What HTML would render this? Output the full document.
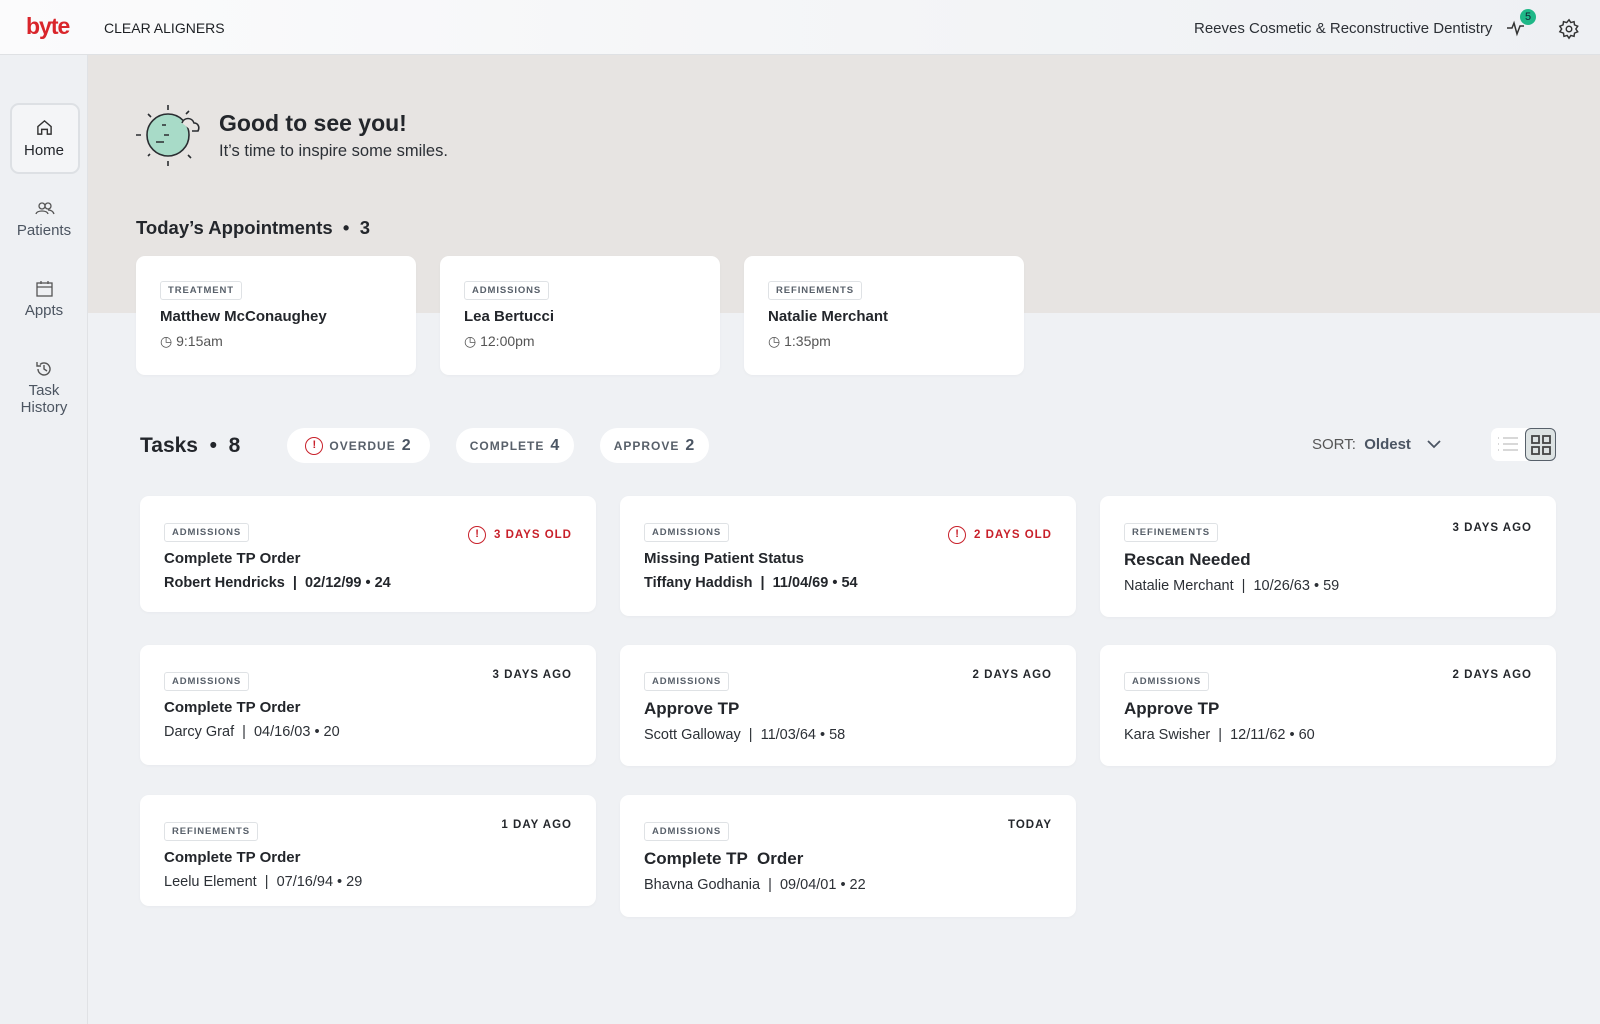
<!DOCTYPE html>
<html><head><meta charset="utf-8"><style>
*{box-sizing:border-box;margin:0;padding:0}
body{width:1600px;height:1024px;overflow:hidden;background:#eff1f4;font-family:"Liberation Sans",sans-serif;color:#23262b;position:relative}
.abs{position:absolute}
.hdr{left:0;top:0;width:1600px;height:55px;background:linear-gradient(90deg,#fbfbfc,#eef0f3);border-bottom:1px solid #dfe1e4}
.side{left:0;top:55px;width:88px;height:969px;background:#eef0f3;border-right:1px solid #e0e2e5}
.beige{left:88px;top:55px;width:1512px;height:258px;background:#e7e4e2}
.nav{width:88px;text-align:center;font-size:15px;color:#4c5561}
.card{background:#fff;border-radius:9px;box-shadow:0 1px 3px rgba(0,0,0,.03)}
.tag{display:inline-block;border:1px solid #dfe2e5;border-radius:3px;font-size:9.5px;font-weight:bold;letter-spacing:.9px;color:#58606a;padding:3px 7px;line-height:11px}
.t1{font-size:15px;font-weight:bold;margin-top:8px}
.t2{font-size:14.5px;margin-top:8px;color:#2c3036}
.rl{position:absolute;right:24px;top:30px;font-size:11.5px;font-weight:bold;letter-spacing:1px}
.red{color:#c8202a}
.pill{background:#fff;border-radius:18px;height:35px;top:428px;font-size:12px;font-weight:bold;letter-spacing:1px;color:#58606a;display:flex;align-items:center;justify-content:center;gap:6px}
.pill b{font-size:16px;color:#4b5563}
.ic{display:inline-block;width:18px;height:18px;border:1.6px solid #c8202a;border-radius:50%;color:#c8202a;font-size:11px;text-align:center;line-height:15px;font-weight:bold;letter-spacing:0}
</style></head><body>
<div class="abs hdr"></div>
<div class="abs" style="left:26px;top:13px;font-size:23px;font-weight:bold;color:#d9252b;letter-spacing:-1px">byte</div>
<div class="abs" style="left:104px;top:20px;font-size:14px;color:#1d2024">CLEAR ALIGNERS</div>
<div class="abs" style="left:1194px;top:20px;font-size:15px;color:#2c3036">Reeves Cosmetic &amp; Reconstructive Dentistry</div>
<svg class="abs" style="left:1506px;top:18px" width="22" height="20" viewBox="0 0 22 20"><path d="M1 10h5l2-5 3 11 3-8h4" fill="none" stroke="#333" stroke-width="1.5"/></svg>
<div class="abs" style="left:1520px;top:9px;width:16px;height:16px;border-radius:50%;background:#1fb888;color:#123;font-size:11px;text-align:center;line-height:16px">5</div>
<svg class="abs" style="left:1558px;top:18px" width="22" height="22" viewBox="0 0 24 24" fill="none" stroke="#333" stroke-width="1.6"><circle cx="12" cy="12" r="3"/><path d="M12 2l2 3 3.5-1 .5 3.5 3.5 1.5-2 3 2 3-3.5 1.5-.5 3.5-3.5-1-2 3-2-3-3.5 1-.5-3.5L2 15l2-3-2-3 3.5-1.5L6 4l3.5 1z"/></svg>
<div class="abs side"></div>
<div class="abs beige"></div>
<div class="abs" style="left:10px;top:103px;width:70px;height:71px;border:2px solid #dde0e4;border-radius:9px;background:#f4f5f7"></div>
<svg class="abs" style="left:36px;top:119px" width="17" height="17" viewBox="0 0 18 18" fill="none" stroke="#333" stroke-width="1.5"><path d="M2 8l7-6 7 6v8h-4v-5H6v5H2z"/></svg>
<div class="abs nav" style="top:142px;color:#23262b">Home</div>
<svg class="abs" style="left:35px;top:201px" width="20" height="14" viewBox="0 0 20 14" fill="none" stroke="#555" stroke-width="1.3"><circle cx="7" cy="5" r="3"/><circle cx="13" cy="5" r="3"/><path d="M1 13c1-4 11-4 12 0M13 9c3 0 5 1 6 4"/></svg>
<div class="abs nav" style="top:222px">Patients</div>
<svg class="abs" style="left:36px;top:280px" width="17" height="17" viewBox="0 0 17 17" fill="none" stroke="#555" stroke-width="1.3"><rect x="1" y="3" width="15" height="13"/><path d="M1 7h15M5 1v3M12 1v3"/></svg>
<div class="abs nav" style="top:302px">Appts</div>
<svg class="abs" style="left:35px;top:360px" width="18" height="18" viewBox="0 0 18 18" fill="none" stroke="#555" stroke-width="1.4"><path d="M3 9a6 6 0 1 0 2-4.5M2 2v4h4M9 5v4l3 2"/></svg>
<div class="abs nav" style="top:382px;line-height:17px">Task<br>History</div>

<svg class="abs" style="left:136px;top:103px" width="70" height="66" viewBox="0 0 70 66" fill="none" stroke="#2a2d31" stroke-width="1.6"><circle cx="32" cy="32" r="21" fill="#a8dbc8"/><path d="M46 20c2-6 10-6 12 0 4 0 6 4 4 8h-6" fill="#e7e4e2"/><path d="M32 2v5M32 58v5M12 11l3 3M52 52l3 3M0 32h5M12 53l2-2M50 11l3-3M26 22h4M28 32h5M20 39h8"/></svg>
<div class="abs" style="left:219px;top:110px;font-size:23px;font-weight:bold">Good to see you!</div>
<div class="abs" style="left:219px;top:142px;font-size:16.5px;color:#2c3036">It’s time to inspire some smiles.</div>
<div class="abs" style="left:136px;top:217px;font-size:18.5px;font-weight:bold">Today’s Appointments &nbsp;• &nbsp;3</div>

<div class="abs card" style="left:136px;top:256px;width:280px;height:119px;padding:24px 24px"><span class="tag">TREATMENT</span><div class="t1">Matthew McConaughey</div><div class="t2" style="color:#555;font-size:14px">◷ 9:15am</div></div>
<div class="abs card" style="left:440px;top:256px;width:280px;height:119px;padding:24px 24px"><span class="tag">ADMISSIONS</span><div class="t1">Lea Bertucci</div><div class="t2" style="color:#555;font-size:14px">◷ 12:00pm</div></div>
<div class="abs card" style="left:744px;top:256px;width:280px;height:119px;padding:24px 24px"><span class="tag">REFINEMENTS</span><div class="t1">Natalie Merchant</div><div class="t2" style="color:#555;font-size:14px">◷ 1:35pm</div></div>

<div class="abs" style="left:140px;top:434px;font-size:21px;font-weight:bold">Tasks &nbsp;• &nbsp;8</div>
<div class="abs pill" style="left:287px;width:143px"><span class="ic">!</span>OVERDUE <b>2</b></div>
<div class="abs pill" style="left:456px;width:118px">COMPLETE <b>4</b></div>
<div class="abs pill" style="left:600px;width:109px">APPROVE <b>2</b></div>
<div class="abs" style="left:1312px;top:436px;font-size:15px;color:#555">SORT: &nbsp;<b style="color:#4b5563">Oldest</b></div>
<svg class="abs" style="left:1426px;top:439px" width="16" height="10" viewBox="0 0 16 10" fill="none" stroke="#4b5563" stroke-width="1.8"><path d="M2 2l6 6 6-6"/></svg>
<div class="abs" style="left:1491px;top:428px;width:64px;height:33px;background:#fff;border-radius:7px"></div>
<svg class="abs" style="left:1497px;top:436px" width="22" height="16" viewBox="0 0 22 16" stroke="#ccc" stroke-width="1.4"><path d="M1 2h1M6 2h15M1 8h1M6 8h15M1 14h1M6 14h15"/></svg>
<div class="abs" style="left:1525px;top:428px;width:31px;height:33px;background:#dde3e3;border:1.5px solid #57606a;border-radius:6px"></div>
<svg class="abs" style="left:1530px;top:434px" width="22" height="22" viewBox="0 0 22 22" fill="none" stroke="#444" stroke-width="1.8"><rect x="2" y="2" width="7" height="7"/><rect x="13" y="2" width="7" height="7"/><rect x="2" y="13" width="7" height="7"/><rect x="13" y="13" width="7" height="7"/></svg>

<div class="abs card" style="left:140px;top:496px;width:456px;height:116px;padding:26px 24px"><span class="tag">ADMISSIONS</span><div class="t1">Complete TP Order</div><div class="t2" style="font-weight:bold;color:#23262b">Robert Hendricks &nbsp;| &nbsp;02/12/99 • 24</div><div class="rl red"><span class="ic" style="vertical-align:middle;margin-right:8px">!</span>3 DAYS OLD</div></div>
<div class="abs card" style="left:620px;top:496px;width:456px;height:120px;padding:26px 24px"><span class="tag">ADMISSIONS</span><div class="t1">Missing Patient Status</div><div class="t2" style="font-weight:bold;color:#23262b">Tiffany Haddish &nbsp;| &nbsp;11/04/69 • 54</div><div class="rl red"><span class="ic" style="vertical-align:middle;margin-right:8px">!</span>2 DAYS OLD</div></div>
<div class="abs card" style="left:1100px;top:496px;width:456px;height:121px;padding:26px 24px"><span class="tag">REFINEMENTS</span><div class="t1" style="font-size:17px">Rescan Needed</div><div class="t2">Natalie Merchant &nbsp;| &nbsp;10/26/63 • 59</div><div class="rl" style="top:26px">3 DAYS AGO</div></div>

<div class="abs card" style="left:140px;top:645px;width:456px;height:120px;padding:26px 24px"><span class="tag">ADMISSIONS</span><div class="t1">Complete TP Order</div><div class="t2">Darcy Graf &nbsp;| &nbsp;04/16/03 • 20</div><div class="rl" style="top:24px">3 DAYS AGO</div></div>
<div class="abs card" style="left:620px;top:645px;width:456px;height:121px;padding:26px 24px"><span class="tag">ADMISSIONS</span><div class="t1" style="font-size:17px">Approve TP</div><div class="t2">Scott Galloway &nbsp;| &nbsp;11/03/64 • 58</div><div class="rl" style="top:24px">2 DAYS AGO</div></div>
<div class="abs card" style="left:1100px;top:645px;width:456px;height:121px;padding:26px 24px"><span class="tag">ADMISSIONS</span><div class="t1" style="font-size:17px">Approve TP</div><div class="t2">Kara Swisher &nbsp;| &nbsp;12/11/62 • 60</div><div class="rl" style="top:24px">2 DAYS AGO</div></div>

<div class="abs card" style="left:140px;top:795px;width:456px;height:111px;padding:26px 24px"><span class="tag">REFINEMENTS</span><div class="t1">Complete TP Order</div><div class="t2">Leelu Element &nbsp;| &nbsp;07/16/94 • 29</div><div class="rl" style="top:24px">1 DAY AGO</div></div>
<div class="abs card" style="left:620px;top:795px;width:456px;height:122px;padding:26px 24px"><span class="tag">ADMISSIONS</span><div class="t1" style="font-size:17px">Complete TP &nbsp;Order</div><div class="t2">Bhavna Godhania &nbsp;| &nbsp;09/04/01 • 22</div><div class="rl" style="top:24px">TODAY</div></div>
</body></html>
